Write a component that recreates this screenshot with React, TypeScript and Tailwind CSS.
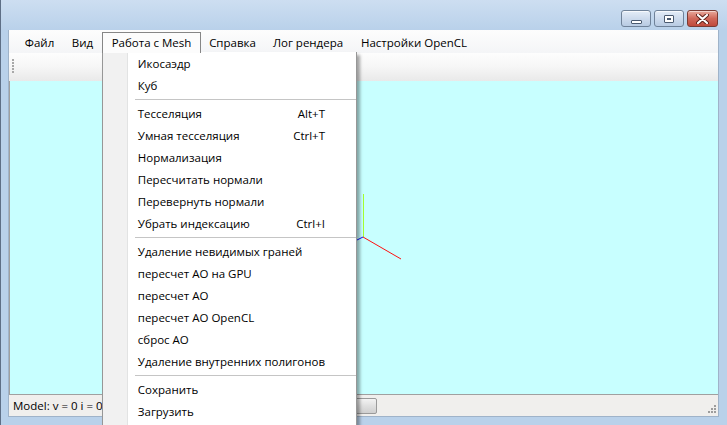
import React from 'react';

const font = { fontFamily: '"Open Sans", "Noto Sans", sans-serif' };

type Item = { label: string; shortcut?: string } | 'sep';

const menuItems: Item[] = [
  { label: 'Икосаэдр' },
  { label: 'Куб' },
  'sep',
  { label: 'Тесселяция', shortcut: 'Alt+T' },
  { label: 'Умная тесселяция', shortcut: 'Ctrl+T' },
  { label: 'Нормализация' },
  { label: 'Пересчитать нормали' },
  { label: 'Перевернуть нормали' },
  { label: 'Убрать индексацию', shortcut: 'Ctrl+I' },
  'sep',
  { label: 'Удаление невидимых граней' },
  { label: 'пересчет АО на GPU' },
  { label: 'пересчет АО' },
  { label: 'пересчет АО OpenCL' },
  { label: 'сброс АО' },
  { label: 'Удаление внутренних полигонов' },
  'sep',
  { label: 'Сохранить' },
  { label: 'Загрузить' },
];

const CaptionButton = ({ kind }: { kind: 'min' | 'max' | 'close' }) => {
  if (kind === 'close') {
    return (
      <div className="w-[31px] h-[17px] rounded-[3px] border border-[#7a3b33] bg-gradient-to-b from-[#e8a99c] via-[#d0685a] to-[#c04a3c] flex items-center justify-center shadow-[inset_0_1px_0_rgba(255,255,255,0.5)]">
        <svg width="13" height="10" viewBox="0 0 13 10">
          <path d="M2 1 L11 9 M11 1 L2 9" stroke="#5a1f18" strokeWidth="4" strokeLinecap="round" />
          <path d="M2 1 L11 9 M11 1 L2 9" stroke="#ffffff" strokeWidth="2.2" strokeLinecap="round" />
        </svg>
      </div>
    );
  }
  return (
    <div className="w-[30px] h-[17px] rounded-[3px] border border-[#6f8299] bg-gradient-to-b from-[#e4edf8] via-[#cddbed] to-[#b8cbe3] flex items-center justify-center shadow-[inset_0_1px_0_rgba(255,255,255,0.7)]">
      {kind === 'min' ? (
        <div className="w-[11px] h-[4px] mt-[6px] bg-white border border-[#4a5a70] rounded-[1px]" />
      ) : (
        <div className="w-[10px] h-[8px] bg-white border border-[#4a5a70] rounded-[1px] flex items-center justify-center">
          <div className="w-[4px] h-[2px] bg-[#cdd8e6] border border-[#4a5a70]" />
        </div>
      )}
    </div>
  );
};

const MenuBar = () => {
  const items: [string, string][] = [
    ['Файл', 'w-[47px]'],
    ['Вид', 'w-[39px]'],
    ['Работа с Mesh', 'w-[99px]'],
    ['Справка', 'w-[63px]'],
    ['Лог рендера', 'w-[88px]'],
    ['Настройки OpenCL', 'w-[124px]'],
  ];
  return (
    <div className="h-[23px] flex items-end pl-[7px] bg-gradient-to-b from-[#fdfdfd] to-[#f4f5f7]">
      {items.map(([label, w]) =>
        label === 'Работа с Mesh' ? (
          <div
            key={label}
            className={`${w} h-[21px] border border-b-0 border-[#868686] bg-[#fcfcfc] flex items-center justify-center text-[11.5px] text-black whitespace-nowrap relative z-20`}
          >
            {label}
          </div>
        ) : (
          <div key={label} className={`${w} h-[21px] flex items-center justify-center text-[11.5px] text-black whitespace-nowrap`}>
            {label}
          </div>
        )
      )}
    </div>
  );
};

const Dropdown = () => (
  <div className="absolute left-[101px] top-[52px] w-[255px] h-[400px] bg-white border border-t-0 border-[#979797] shadow-[3px_3px_3px_rgba(0,0,0,0.35)] z-10 flex">
    <div className="w-[25px] bg-[#f1f1f1] border-r border-[#e2e3e3]" />
    <div className="flex-1 flex flex-col pt-[1px] -ml-[26px]">
      {menuItems.map((it, i) =>
        it === 'sep' ? (
          <div key={i} className="h-[6px] flex items-center pl-[33px]">
            <div className="w-full h-[2px] border-t border-[#c5c5c5] border-b border-b-white" />
          </div>
        ) : (
          <div key={i} className="h-[22px] flex items-center justify-between pl-[36px] pr-[31px] text-[11.5px] text-black whitespace-nowrap">
            <span>{it.label}</span>
            {it.shortcut && <span>{it.shortcut}</span>}
          </div>
        )
      )}
    </div>
  </div>
);

export default function App() {
  return (
    <div className="w-[727px] h-[425px] relative overflow-hidden bg-[#b9d1ea] border-l border-[#5e6f86] flex flex-col" style={font}>
      {/* Title bar */}
      <div className="h-[30px] shrink-0 bg-gradient-to-b from-[#cddef1] to-[#b9d1ea] flex items-start justify-end pt-[10px] pr-[9px] gap-[3px]">
        <CaptionButton kind="min" />
        <CaptionButton kind="max" />
        <CaptionButton kind="close" />
      </div>

      {/* Client */}
      <div className="flex-1 ml-[7px] mr-[8px] mb-[8px] flex flex-col bg-[#f0f0f0] border border-t-0 border-[#9fb3c9]">
        <MenuBar />

        {/* Toolbar */}
        <div className="h-[28px] shrink-0 bg-gradient-to-b from-[#fdfdfd] via-[#f6f6f6] to-[#e9e9e9] flex items-center pl-[3px]">
          <div className="flex flex-col gap-[1px] h-[17px]">
            {[0, 1, 2, 3, 4].map((d) => (
              <div key={d} className="w-[2px] h-[2px] bg-[#a8a8a8]" />
            ))}
          </div>
        </div>

        {/* GL canvas */}
        <div className="flex-1 bg-[#c8ffff] relative border-l border-[#a0a0a0]">
          <svg className="absolute inset-0" width="711" height="314">
            <rect x="353" y="113" width="1" height="43" fill="#a4ff30" />
            <line x1="353" y1="156" x2="391" y2="178" stroke="#ff1010" strokeWidth="1" />
            <line x1="347" y1="159" x2="353" y2="156" stroke="#1010ff" strokeWidth="1" />
          </svg>
        </div>

        {/* Status bar */}
        <div className="h-[22px] shrink-0 border-t border-[#a0a0a0] bg-[#f0efed] flex items-center relative">
          <span className="pl-[4px] text-[11.5px] text-black whitespace-nowrap">Model: v = 0 i = 0</span>
          <div className="ml-[90px] w-[184px] h-[16px] rounded-[2px] border border-[#9a9a9a] bg-gradient-to-b from-[#f3f3f3] via-[#e0e0e0] to-[#cfcfcf]" />
          <div className="ml-auto mr-[2px] self-end mb-[3px] grid grid-cols-3 gap-[1px] w-[8px]">
            <div />
            <div />
            <div className="w-[2px] h-[2px] bg-[#9d9d9d]" />
            <div />
            <div className="w-[2px] h-[2px] bg-[#9d9d9d]" />
            <div className="w-[2px] h-[2px] bg-[#9d9d9d]" />
            <div className="w-[2px] h-[2px] bg-[#9d9d9d]" />
            <div className="w-[2px] h-[2px] bg-[#9d9d9d]" />
            <div className="w-[2px] h-[2px] bg-[#9d9d9d]" />
          </div>
        </div>
      </div>

      <Dropdown />
    </div>
  );
}
